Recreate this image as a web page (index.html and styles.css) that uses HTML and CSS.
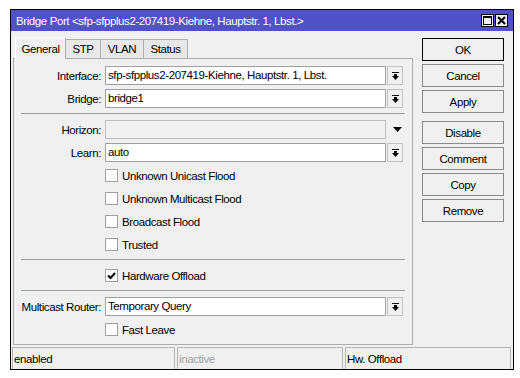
FILE: index.html
```html
<!DOCTYPE html>
<html lang="en">
  <head>
    <meta charset="UTF-8" />
    <title>Bridge Port</title>
    <link rel="stylesheet" href="styles.css">
  </head>
  <body>
    <div class="window">
      <div class="titlebar">
        <span class="title">Bridge Port &lt;sfp-sfpplus2-207419-Kiehne, Hauptstr. 1, Lbst.&gt;</span>
        <div class="win-btns">
          <div class="win-btn">
            <svg width="9" height="9" viewBox="0 0 9 9"><rect x="0.5" y="0.5" width="8" height="8" fill="none" stroke="#000"/><rect x="0" y="0" width="9" height="2" fill="#000"/></svg>
          </div>
          <div class="win-btn">
            <svg width="9" height="9" viewBox="0 0 9 9"><path d="M1 1L8 8M8 1L1 8" stroke="#000" stroke-width="2"/></svg>
          </div>
        </div>
      </div>

      <div class="main">
        <div class="left">
          <div class="tabs">
            <div class="tab active t-general">General</div>
            <div class="tab t-stp">STP</div>
            <div class="tab t-vlan">VLAN</div>
            <div class="tab t-status">Status</div>
          </div>
          <div class="panel">
            <div class="row">
              <span class="label">Interface:</span>
              <div class="field">sfp-sfpplus2-207419-Kiehne, Hauptstr. 1, Lbst.</div>
              <div class="drop"><svg width="7" height="8" viewBox="0 0 7 8"><rect width="7" height="1"/><path d="M2 2h3v2h2L3.5 8 0 4h2z"/></svg></div>
            </div>
            <div class="row">
              <span class="label">Bridge:</span>
              <div class="field">bridge1</div>
              <div class="drop"><svg width="7" height="8" viewBox="0 0 7 8"><rect width="7" height="1"/><path d="M2 2h3v2h2L3.5 8 0 4h2z"/></svg></div>
            </div>
            <div class="sep"></div>
            <div class="row">
              <span class="label">Horizon:</span>
              <div class="field disabled"></div>
              <div class="drop plain"><svg width="9" height="5" viewBox="0 0 9 5"><path d="M0 0h9L4.5 5z"/></svg></div>
            </div>
            <div class="row">
              <span class="label">Learn:</span>
              <div class="field">auto</div>
              <div class="drop"><svg width="7" height="8" viewBox="0 0 7 8"><rect width="7" height="1"/><path d="M2 2h3v2h2L3.5 8 0 4h2z"/></svg></div>
            </div>
            <div class="row check-row"><span class="box"></span>Unknown Unicast Flood</div>
            <div class="row check-row"><span class="box"></span>Unknown Multicast Flood</div>
            <div class="row check-row"><span class="box"></span>Broadcast Flood</div>
            <div class="row check-row"><span class="box"></span>Trusted</div>
            <div class="sep"></div>
            <div class="row check-row">
              <span class="box"><svg width="11" height="11" viewBox="0 0 11 11"><path d="M2 5.5l2.5 2.5L9 3" fill="none" stroke="#000" stroke-width="2"/></svg></span>Hardware Offload
            </div>
            <div class="sep"></div>
            <div class="row">
              <span class="label">Multicast Router:</span>
              <div class="field">Temporary Query</div>
              <div class="drop"><svg width="7" height="8" viewBox="0 0 7 8"><rect width="7" height="1"/><path d="M2 2h3v2h2L3.5 8 0 4h2z"/></svg></div>
            </div>
            <div class="row check-row"><span class="box"></span>Fast Leave</div>
          </div>
        </div>

        <div class="buttons">
          <div class="btn default">OK</div>
          <div class="btn">Cancel</div>
          <div class="btn">Apply</div>
          <div class="btn group">Disable</div>
          <div class="btn">Comment</div>
          <div class="btn">Copy</div>
          <div class="btn">Remove</div>
        </div>
      </div>

      <div class="statusbar">
        <div class="status s1">enabled</div>
        <div class="status s2 muted">inactive</div>
        <div class="status s3">Hw. Offload</div>
      </div>
    </div>
  </body>
</html>
```

FILE: styles.css
```css
* {
  box-sizing: border-box;
}
body {
  margin: 0;
  background: #fff;
  font-family: "Liberation Sans", Arial, sans-serif;
  font-size: 11.5px;
  letter-spacing: -0.4px;
  color: #000;
}
.window {
  margin: 9px 0 0 10px;
  width: 504px;
  height: 361px;
  border: 1px solid #000;
  background: #f0f0f0;
  display: flex;
  flex-direction: column;
}
.titlebar {
  height: 21px;
  background: #5151c9;
  color: #fff;
  display: flex;
  align-items: center;
  padding-left: 5px;
}
.title {
  flex: 1;
  white-space: nowrap;
}
.win-btns {
  display: flex;
  gap: 1px;
  margin-right: 5px;
}
.win-btn {
  width: 13px;
  height: 13px;
  border: 1px solid #000;
  background: #f0f0f0;
  display: flex;
  align-items: center;
  justify-content: center;
}
.main {
  display: flex;
  height: 316px;
  padding: 6px 0 0 2px;
}
.left {
  width: 400px;
  display: flex;
  flex-direction: column;
}
.tabs {
  display: flex;
  align-items: flex-end;
  height: 21px;
  padding-left: 2px;
}
.tab {
  height: 19px;
  margin-right: -1px;
  border: 1px solid #adadad;
  border-bottom: none;
  background: #e8e8e8;
  display: flex;
  align-items: center;
  justify-content: center;
}
.tab.active {
  height: 22px;
  margin-bottom: -1px;
  background: #f0f0f0;
  border-color: #fff #adadad #fff #fff;
  position: relative;
  z-index: 1;
}
.t-general {
  width: 51px;
}
.t-stp {
  width: 36px;
}
.t-vlan {
  width: 44px;
}
.t-status {
  width: 45px;
}
.panel {
  height: 287px;
  border: 1px solid #adadad;
  display: flex;
  flex-direction: column;
  gap: 4px;
  padding-top: 7px;
}
.row {
  display: flex;
  align-items: center;
  height: 19px;
  flex-shrink: 0;
}
.label {
  width: 87px;
  margin-right: 4px;
  text-align: right;
  white-space: nowrap;
}
.field {
  width: 281px;
  height: 19px;
  border: 1px solid #a0a0a0;
  background: #fff;
  padding-left: 2px;
  line-height: 17px;
  white-space: nowrap;
  overflow: hidden;
}
.field.disabled {
  background: #f0f0f0;
  border-color: #bdbdbd;
}
.drop {
  width: 16px;
  height: 19px;
  margin-left: 1px;
  border: 1px solid #c4c4c4;
  background: #f0f0f0;
  display: flex;
  align-items: center;
  justify-content: center;
}
.drop.plain {
  border-color: transparent;
  margin-left: 3px;
}
.check-row {
  padding-left: 91px;
}
.box {
  width: 13px;
  height: 13px;
  margin-right: 4px;
  border: 1px solid #a0a0a0;
  background: #fff;
  display: flex;
  align-items: center;
  justify-content: center;
}
.sep {
  height: 1px;
  flex-shrink: 0;
  margin: 1px 7px 2px;
  background: #a0a0a0;
}
.buttons {
  width: 82px;
  margin-left: 9px;
  padding-top: 1px;
  display: flex;
  flex-direction: column;
  gap: 3px;
}
.btn {
  height: 23px;
  border: 1px solid #8a8a8a;
  background: #f0f0f0;
  display: flex;
  align-items: center;
  justify-content: center;
}
.btn.default {
  border-color: #000;
}
.btn.group {
  margin-top: 5px;
}
.statusbar {
  height: 22px;
  display: flex;
  gap: 2px;
  padding: 0 2px 0 1px;
}
.status {
  border: 1px solid #b4b4b4;
  border-bottom: none;
  padding-left: 1px;
  display: flex;
  align-items: center;
}
.s1 {
  width: 163px;
}
.s2,
.s3 {
  width: 166px;
}
.muted {
  color: #a0a0a0;
}
```
